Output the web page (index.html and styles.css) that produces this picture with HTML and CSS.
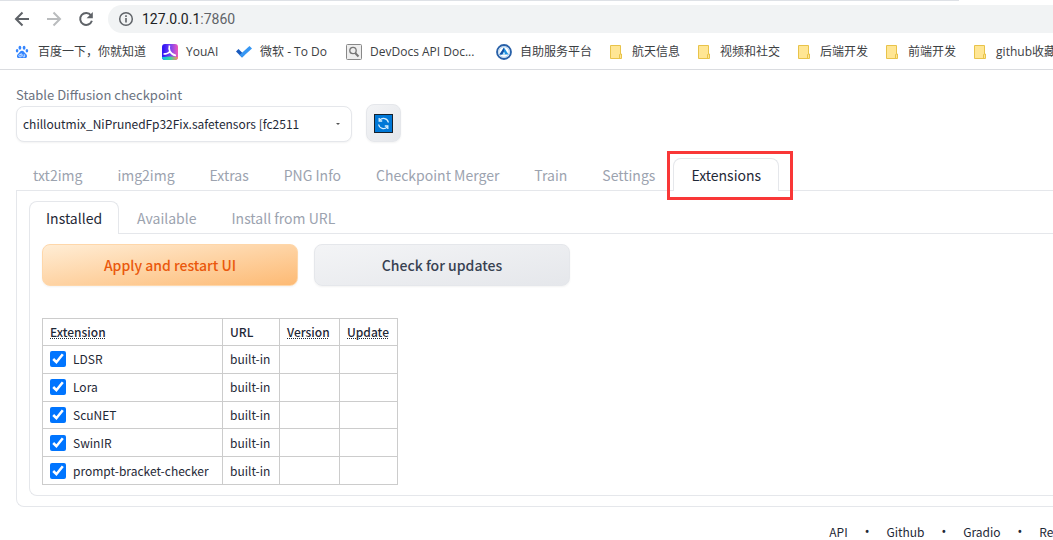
FILE: index.html
```html
<!DOCTYPE html>
<html lang="zh-CN">
<head>
<meta charset="utf-8">
<title>Stable Diffusion</title>
<link rel="stylesheet" href="styles.css">
</head>
<body>
<header class="browser">
  <div class="tabstrip"></div>
  <div class="toolbar">
    <button class="nav" aria-label="Back"><svg width="16" height="16" viewBox="0 0 16 16" fill="none" stroke="#5f6368" stroke-width="2"><path d="M15 8H2M8.500 1.500 2 8l6.500 6.500"/></svg></button>
    <button class="nav" aria-label="Forward"><svg width="16" height="16" viewBox="0 0 16 16" fill="none" stroke="#babcbe" stroke-width="2"><path d="M1 8h13M7.500 1.500 14 8l-6.500 6.500"/></svg></button>
    <button class="nav" aria-label="Reload"><svg width="16" height="16" viewBox="0 0 16 16"><path d="M13 4.300A6 6 0 1 0 13.900 9.800" fill="none" stroke="#5f6368" stroke-width="2"/><path d="M14.800 1v6.200H8.600z" fill="#5f6368"/></svg></button>
    <div class="address">
      <svg width="16" height="16" viewBox="0 0 16 16"><circle cx="8" cy="8" r="6.300" fill="none" stroke="#5f6368" stroke-width="1.500"/><path d="M7.200 7h1.600v4.500H7.200zM7.200 4.300h1.600v1.600H7.200z" fill="#5f6368"/></svg>
      <span>127.0.0.1<span class="port">:7860</span></span>
    </div>
  </div>
  <nav class="bookmarks">
    <a href="#"><svg width="16" height="16" viewBox="0 0 16 16" fill="#3385ff"><ellipse cx="5.900" cy="3.700" rx="1.400" ry="2"/><ellipse cx="10.100" cy="3.700" rx="1.400" ry="2"/><ellipse cx="3.100" cy="6.800" rx="1.300" ry="1.700"/><ellipse cx="12.900" cy="6.800" rx="1.300" ry="1.700"/><path d="M8 6.700c2 0 2.500 2 4 3.200 1.600 1.400 1.300 4.100-.9 4.200H4.900c-2.200-.1-2.500-2.800-.9-4.200C5.500 8.700 6 6.700 8 6.700z"/><path d="M7.200 9.200v3.600H5.900a1.100 1.100 0 1 1 0-2.200h1.300M8.800 10.300v1.800q0 .7.700.7h1.100v-2.500" fill="none" stroke="#fff" stroke-width=".7"/></svg>百度一下，你就知道</a>
    <a class="app-link" href="#"><svg width="16" height="16" viewBox="0 0 16 16"><defs><linearGradient id="y" x1="0" y1="0" x2="1" y2="0"><stop offset=".1" stop-color="#3218f5"/><stop offset=".55" stop-color="#7a45f2"/><stop offset="1" stop-color="#f05ab8"/></linearGradient><linearGradient id="z" x1="0" x2="1"><stop stop-color="#11b9ee"/><stop offset=".5" stop-color="#35d99b"/><stop offset="1" stop-color="#ff8b62"/></linearGradient></defs><rect width="16" height="16" rx="3" fill="url(#y)"/><path d="M0 13q8-1 16 0 0 3-3 3H3q-3 0-3-3z" fill="url(#z)"/><path d="M7.500 1.500q-1 3 .5 6-2 2.500-6.500 2.500M8 7.500q2 3.500 6 4" fill="none" stroke="#fff" stroke-width="1.600"/></svg>YouAI</a>
    <a class="todo-link" href="#"><svg width="16" height="16" viewBox="0 0 16 16"><path d="m0 7.500 2.500-2.500L8.500 11l-2.500 2.500z" fill="#195abd"/><path d="m3.500 11 10-9L16 4.500 6 13.500z" fill="#3797f3"/></svg>微软 - To Do</a>
    <a class="docs-link" href="#"><svg width="16" height="16" viewBox="0 0 16 16" fill="none"><rect x=".5" y=".5" width="15" height="15" rx="1" fill="#eee" stroke="#888"/><circle cx="7" cy="6.500" r="3.200" stroke="#777" stroke-width="1.300"/><path d="m9.200 9 3.300 3.500" stroke="#777" stroke-width="2"/></svg>DevDocs API Doc...</a>
    <a href="#"><svg width="16" height="16" viewBox="0 0 16 16"><circle cx="8" cy="8" r="7" fill="#fff" stroke="#2860a8" stroke-width="1.800"/><circle cx="8" cy="8" r="5.300" fill="none" stroke="#9ec4e4" stroke-width=".8"/><path d="m8 3.500 4.500 7H3.500z" fill="#1d91df"/><path d="m8 3.500-4.500 7h2.500L8 7z" fill="#174ea0"/><path d="M7.300 8.500h1.400v2H7.300z" fill="#fff"/></svg>自助服务平台</a>
    <a href="#"><svg width="16" height="16" viewBox="0 0 16 16"><path d="M2.500 1.500h10V10h1v4.500h-11z" fill="#ffe694" stroke="#e8c34a"/><path d="M11.500 14v-3.500h1" fill="none" stroke="#e8c34a"/></svg>航天信息</a>
    <a href="#"><svg width="16" height="16" viewBox="0 0 16 16"><path d="M2.500 1.500h10V10h1v4.500h-11z" fill="#ffe694" stroke="#e8c34a"/><path d="M11.500 14v-3.500h1" fill="none" stroke="#e8c34a"/></svg>视频和社交</a>
    <a href="#"><svg width="16" height="16" viewBox="0 0 16 16"><path d="M2.500 1.500h10V10h1v4.500h-11z" fill="#ffe694" stroke="#e8c34a"/><path d="M11.500 14v-3.500h1" fill="none" stroke="#e8c34a"/></svg>后端开发</a>
    <a href="#"><svg width="16" height="16" viewBox="0 0 16 16"><path d="M2.500 1.500h10V10h1v4.500h-11z" fill="#ffe694" stroke="#e8c34a"/><path d="M11.500 14v-3.500h1" fill="none" stroke="#e8c34a"/></svg>前端开发</a>
    <a href="#"><svg width="16" height="16" viewBox="0 0 16 16"><path d="M2.500 1.500h10V10h1v4.500h-11z" fill="#ffe694" stroke="#e8c34a"/><path d="M11.500 14v-3.500h1" fill="none" stroke="#e8c34a"/></svg>github收藏</a>
  </nav>
</header>
<main class="app">
  <div class="quick">
    <div class="field">
      <label for="ckpt">Stable Diffusion checkpoint</label>
      <select id="ckpt"><option>chilloutmix_NiPrunedFp32Fix.safetensors [fc2511</option></select>
    </div>
    <button class="refresh" aria-label="Refresh"><svg width="19" height="19" viewBox="0 0 19 19" fill="none"><rect x=".5" y=".5" width="18" height="18" fill="#0078d7" stroke="#17222d"/><path d="M4.600 10.500a5 5 0 0 0 8.700 2.300M14.400 8.500a5 5 0 0 0-8.700-2.300" stroke="#d8efff" stroke-width="1.300"/><path d="M5.200 4v3h3M13.800 15v-3h-3" stroke="#d8efff" stroke-width="1.300"/></svg></button>
  </div>
  <div class="tabs">
    <button>txt2img</button><button>img2img</button><button>Extras</button><button>PNG Info</button><button>Checkpoint Merger</button><button>Train</button><button>Settings</button><button class="active marked">Extensions</button>
  </div>
  <section class="panel">
    <div class="tabs">
      <button class="active">Installed</button><button>Available</button><button>Install from URL</button>
    </div>
    <div class="panel">
      <div class="actions">
        <button class="primary">Apply and restart UI</button>
        <button class="secondary">Check for updates</button>
      </div>
      <table class="extensions">
        <colgroup><col class="col-name"><col class="col-url"><col class="col-version"><col class="col-update"></colgroup>
        <thead><tr><th><abbr title="Use checkbox to enable the extension">Extension</abbr></th><th>URL</th><th><abbr title="Extension version">Version</abbr></th><th><abbr title="Use checkbox to mark for update">Update</abbr></th></tr></thead>
        <tbody>
          <tr><td><label><input type="checkbox" checked>LDSR</label></td><td>built-in</td><td></td><td></td></tr>
          <tr><td><label><input type="checkbox" checked>Lora</label></td><td>built-in</td><td></td><td></td></tr>
          <tr><td><label><input type="checkbox" checked>ScuNET</label></td><td>built-in</td><td></td><td></td></tr>
          <tr><td><label><input type="checkbox" checked>SwinIR</label></td><td>built-in</td><td></td><td></td></tr>
          <tr><td><label><input type="checkbox" checked>prompt-bracket-checker</label></td><td>built-in</td><td></td><td></td></tr>
        </tbody>
      </table>
    </div>
  </section>
  <footer class="footer"><a href="#">API</a><span>•</span><a href="#">Github</a><span>•</span><a href="#">Gradio</a><span>•</span><a href="#">Reload UI</a></footer>
</main>
</body>
</html>
```
FILE: styles.css
```css
* { box-sizing: border-box; }
body {
  margin: 0;
  overflow: hidden;
  background: #fff;
  color: #1f2937;
  font: 13px/20px "Noto Sans CJK SC", sans-serif;
}
button, select, input { font: inherit; margin: 0; }
button { cursor: pointer; }
a { color: inherit; text-decoration: none; }
svg { flex: none; display: block; }

.browser { border-bottom: 1px solid #dadce0; }
.tabstrip { height: 1px; margin-right: 94px; background: #dee1e6; }
.toolbar { display: flex; align-items: center; gap: 16px; padding: 4px 0 0 14px; }
.nav { display: flex; padding: 0; border: 0; background: none; }
.address {
  flex: 1;
  display: flex;
  align-items: center;
  gap: 8px;
  height: 28px;
  margin-left: -2px;
  padding-left: 10px;
  border-radius: 14px 0 0 14px;
  background: #f1f3f4;
  color: #202124;
  font: 14px/20px Roboto, sans-serif;
}
.port { color: #5f6368; }
.bookmarks {
  display: flex;
  align-items: center;
  gap: 16px;
  height: 36px;
  padding: 1px 0 0 14px;
  overflow: hidden;
  color: #3c4043;
  font: 12px/18px "Open Sans", "Noto Sans CJK SC", sans-serif;
}
.bookmarks a { flex: none; display: flex; align-items: center; gap: 8px; white-space: nowrap; }
.app-link { min-width: 58px; }
.todo-link { min-width: 94px; }
.docs-link { min-width: 134px; }

.app { padding: 16px 0 0 16px; }
.quick { display: flex; align-items: flex-end; gap: 14px; }
.field { display: flex; flex-direction: column; gap: 2px; width: 336px; }
.field label { color: #6b7280; line-height: 18px; }
select {
  appearance: none;
  height: 36px;
  padding: 0 24px 0 6px;
  border: 1px solid #e5e7eb;
  border-radius: 8px;
  background: #fff url("data:image/svg+xml,%3Csvg xmlns='http://www.w3.org/2000/svg' width='6' height='4'%3E%3Cpath d='M1 1h4L3 3z' fill='%23555'/%3E%3C/svg%3E") no-repeat right 10px center;
  box-shadow: 0 1px 2px #0000000d;
  color: #1f2937;
  font-size: 12px;
}
.refresh {
  display: grid;
  place-items: center;
  width: 35px;
  height: 38px;
  padding: 0;
  border: 1px solid #e5e7eb;
  border-radius: 8px;
  background: linear-gradient(to bottom right, #f3f4f6, #e5e7eb);
  box-shadow: 0 1px 2px #0000000d;
}

.tabs { display: flex; gap: 1px; border-bottom: 1px solid #e5e7eb; }
.tabs button {
  height: 33px;
  margin-bottom: -1px;
  padding: 0 16px;
  border: 1px solid transparent;
  border-bottom: 0;
  border-radius: 8px 8px 0 0;
  background: none;
  color: #9ca3af;
  font-size: 14px;
  white-space: nowrap;
}
.tabs .active { border-color: #e5e7eb; background: #fff; color: #1f2937; }
.app > .tabs { margin-top: 16px; }
.tabs .marked { position: relative; padding: 0 17px; }
.marked::after {
  content: "";
  position: absolute;
  inset: -8px -15px -9px -7px;
  border: 3px solid #f93737;
}
.panel {
  padding: 10px 0 10px 12px;
  border: solid #e5e7eb;
  border-width: 0 0 1px 1px;
  border-radius: 0 0 0 8px;
}
.actions { display: flex; gap: 16px; }
.actions button {
  width: 256px;
  height: 42px;
  border: 1px solid #e5e7eb;
  border-radius: 8px;
  box-shadow: 0 1px 2px #0000000d;
  font-size: 14px;
  font-weight: 500;
}
.actions .primary { border-color: #fed7aa; background: linear-gradient(to bottom right, #ffedd5, #fdba74); color: #ea580c; }
.actions .secondary { background: linear-gradient(to bottom right, #f3f4f6, #e5e7eb); color: #374151; }

.extensions { height: 167px; margin-top: 32px; border-collapse: collapse; font-size: 12px; }
.extensions th, .extensions td { height: 27px; padding: 0 7px; border: 1px solid #ccc; line-height: 18px; text-align: left; }
.extensions th { font-weight: 500; }
.extensions abbr { text-decoration: underline dotted; }
.extensions label { display: flex; align-items: center; gap: 7px; }
.extensions input { width: 16px; height: 16px; accent-color: #0075ff; }
.col-name { width: 180px; }
.col-url { width: 57px; }
.col-version { width: 60px; }
.col-update { width: 58px; }

.footer { display: flex; justify-content: flex-end; gap: 17px; margin: 15px -40px 0 0; font-size: 12px; white-space: nowrap; }
.footer span { font-family: Roboto, sans-serif; font-size: 14px; }
```
